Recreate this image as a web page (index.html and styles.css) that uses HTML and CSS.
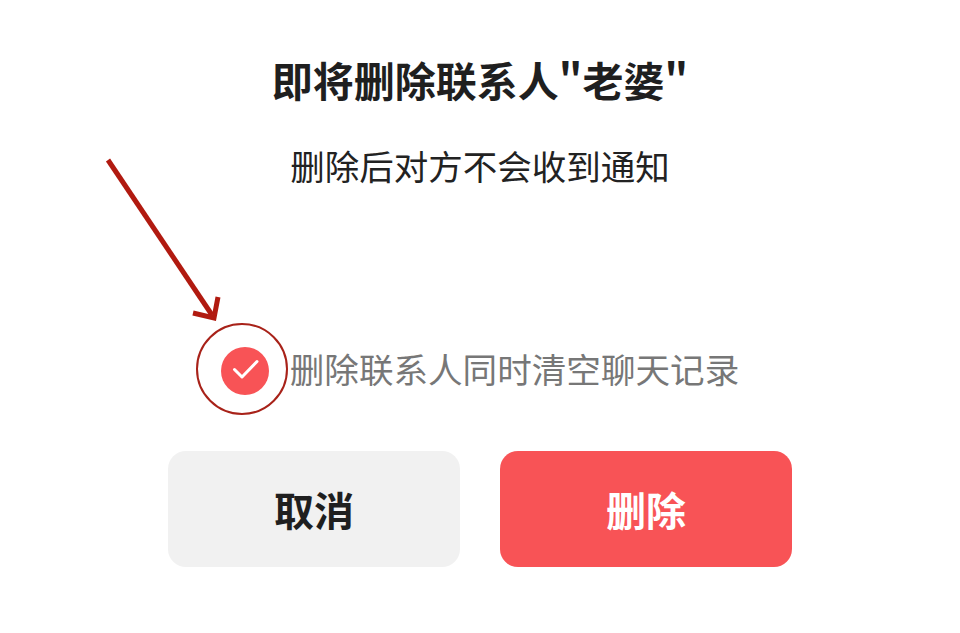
FILE: index.html
```html
<!DOCTYPE html>
<html lang="zh-CN">
<head>
    <meta charset="UTF-8">
    <meta name="viewport" content="width=device-width, initial-scale=1.0">
    <title>删除联系人</title>
    <link rel="stylesheet" href="styles.css">
</head>
<body>
    <div class="dialog">
        <h1 class="dialog-title">即将删除联系人"老婆"</h1>
        <p class="dialog-text">删除后对方不会收到通知</p>

        <label class="check-row">
            <span class="check-icon">
                <svg width="48" height="48" viewBox="0 0 48 48">
                    <circle cx="24" cy="24" r="24" fill="#f85356"/>
                    <path d="M13.5 22.5 L21 30 L36 14.5" fill="none" stroke="#fff" stroke-width="3" stroke-linecap="round" stroke-linejoin="round"/>
                </svg>
            </span>
            <span class="check-label">删除联系人同时清空聊天记录</span>
        </label>

        <div class="dialog-buttons">
            <button class="btn btn-cancel">取消</button>
            <button class="btn btn-delete">删除</button>
        </div>
    </div>

    <!-- hand-drawn markup on top of the dialog -->
    <svg class="markup" width="960" height="633" viewBox="0 0 960 633">
        <g fill="none" stroke="#b11a10" stroke-width="5" stroke-linecap="butt">
            <line x1="108" y1="160" x2="212" y2="315"/>
            <polyline points="218,297 214,318 193,313"/>
        </g>
        <circle cx="242" cy="369" r="45" fill="none" stroke="#a82219" stroke-width="2"/>
    </svg>
</body>
</html>
```

FILE: styles.css
```css
body {
    margin: 0;
    padding: 0;
    background-color: #fff;
    font-family: "Noto Sans CJK SC", "Noto Sans", sans-serif;
    color: #222;
}

.dialog {
    width: 960px;
    height: 633px;
    padding-top: 51px;
    box-sizing: border-box;
    display: flex;
    flex-direction: column;
    align-items: center;
}

.dialog-title {
    margin: 0;
    font-size: 41px;
    line-height: 56px;
    font-weight: 700;
    color: #1f1f1f;
}

.dialog-text {
    margin: 34px 0 0;
    font-size: 34.5px;
    line-height: 48px;
    color: #222;
}

.check-row {
    margin-top: 158px;
    display: flex;
    align-items: center;
    gap: 21px;
    height: 48px;
}

.check-icon {
    display: flex;
    width: 48px;
    height: 48px;
}

.check-label {
    font-size: 34.6px;
    line-height: 48px;
    color: #777;
    position: relative;
    top: -3px;
}

.dialog-buttons {
    margin-top: 56px;
    display: flex;
    gap: 40px;
}

.btn {
    width: 292px;
    height: 116px;
    border: none;
    border-radius: 18px;
    font-family: inherit;
    font-size: 40px;
    font-weight: 700;
    cursor: pointer;
}

.btn-cancel {
    background: #f1f1f1;
    color: #1f1f1f;
}

.btn-delete {
    background: #f85356;
    color: #fff;
}

.markup {
    position: absolute;
    top: 0;
    left: 0;
    pointer-events: none;
}
```
